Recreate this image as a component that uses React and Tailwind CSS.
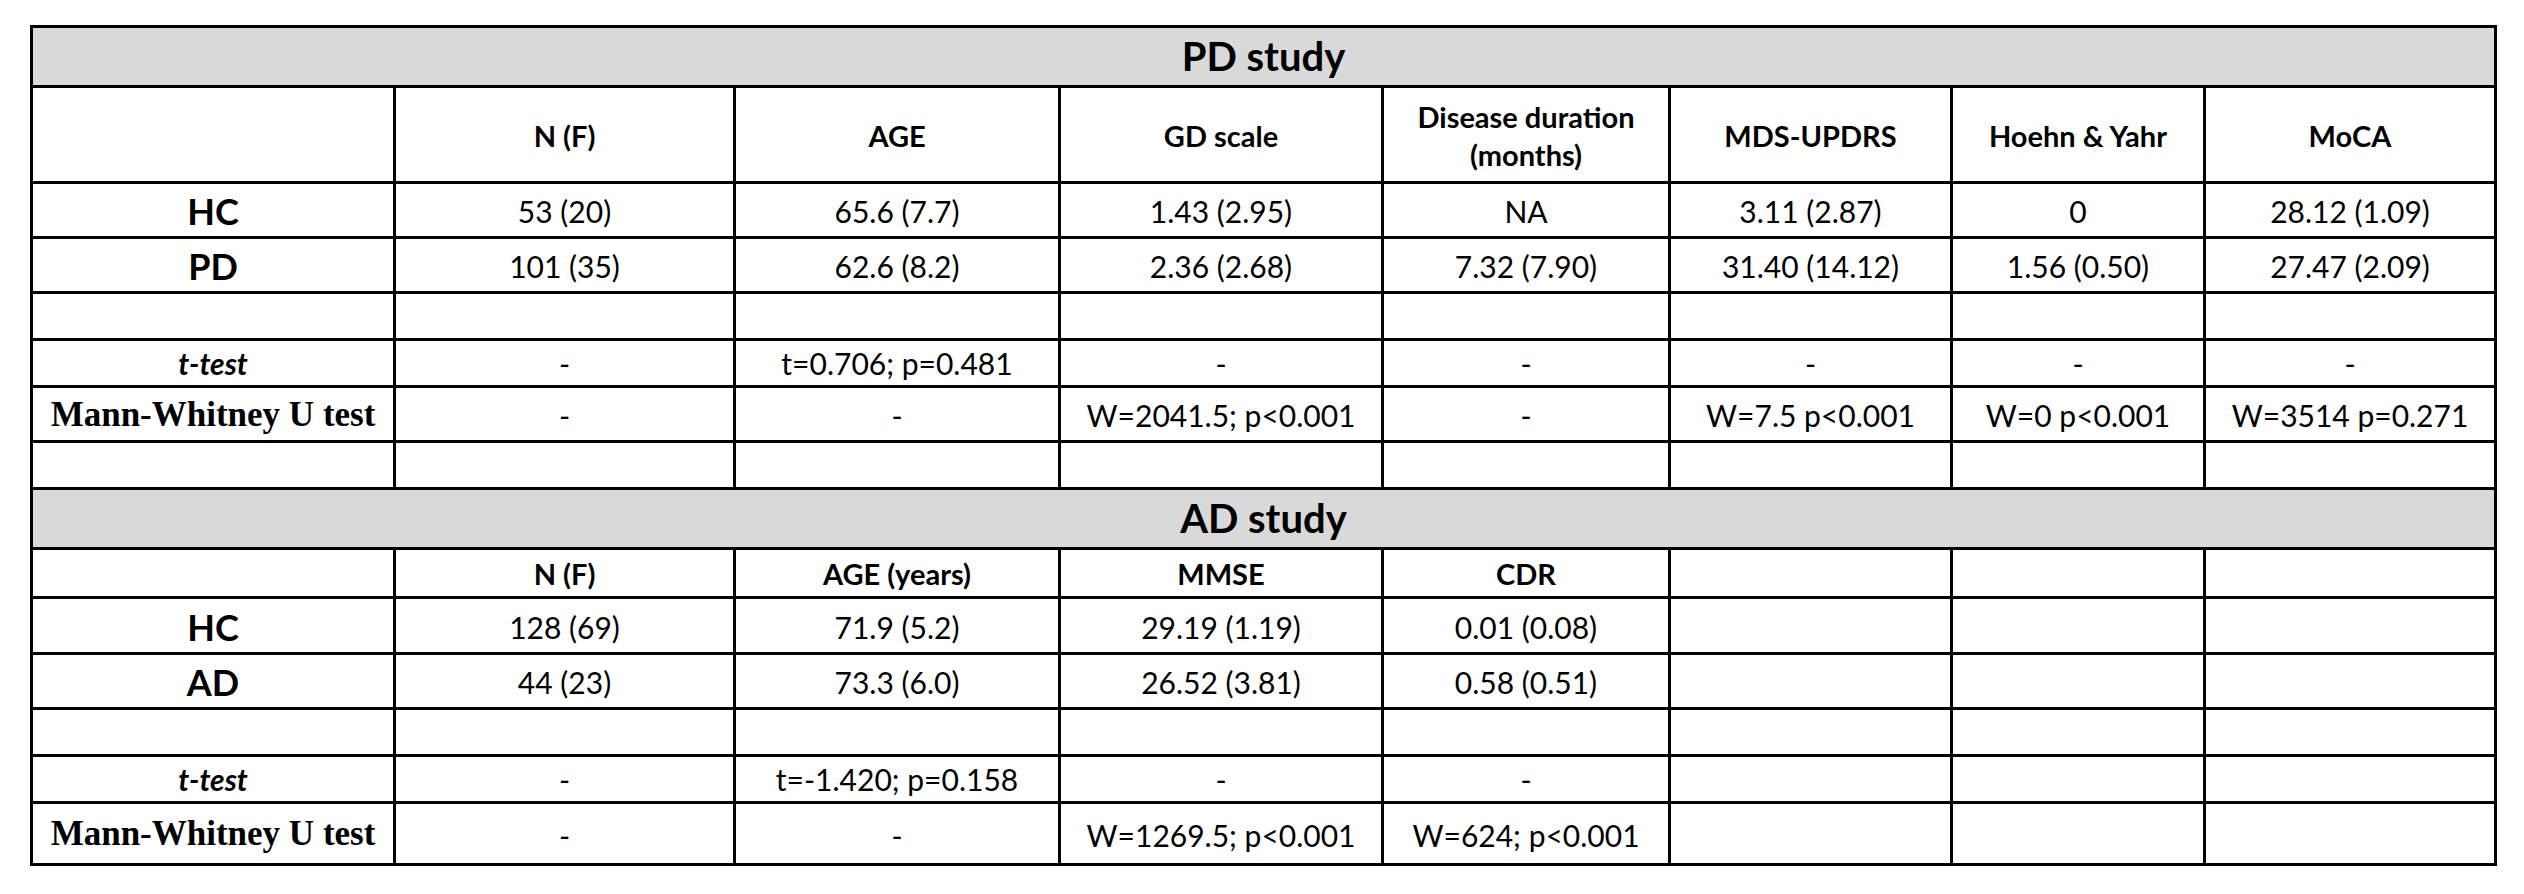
const cols = "grid-cols-[360px_337px_322px_320px_284px_279px_250px_288px]";

const pdHead = ["", "N (F)", "AGE", "GD scale", "Disease duration|(months)", "MDS-UPDRS", "Hoehn & Yahr", "MoCA"];
const pdRows = [
  ["HC", "53 (20)", "65.6 (7.7)", "1.43 (2.95)", "NA", "3.11 (2.87)", "0", "28.12 (1.09)"],
  ["PD", "101 (35)", "62.6 (8.2)", "2.36 (2.68)", "7.32 (7.90)", "31.40 (14.12)", "1.56 (0.50)", "27.47 (2.09)"],
];
const pdT = ["-", "t=0.706; p=0.481", "-", "-", "-", "-", "-"];
const pdW = ["-", "-", "W=2041.5; p<0.001", "-", "W=7.5 p<0.001", "W=0 p<0.001", "W=3514 p=0.271"];

const adHead = ["", "N (F)", "AGE (years)", "MMSE", "CDR", "", "", ""];
const adRows = [
  ["HC", "128 (69)", "71.9 (5.2)", "29.19 (1.19)", "0.01 (0.08)", "", "", ""],
  ["AD", "44 (23)", "73.3 (6.0)", "26.52 (3.81)", "0.58 (0.51)", "", "", ""],
];
const adT = ["-", "t=-1.420; p=0.158", "-", "-", "", "", ""];
const adW = ["-", "-", "W=1269.5; p<0.001", "W=624; p<0.001", "", "", ""];

const sans = "font-['Lato','Liberation_Sans',sans-serif]";

const Cell = ({ children, className = "" }) => (
  <div className={`flex items-center justify-center text-center bg-white text-black ${className}`}>{children}</div>
);

const Title = ({ text }) => (
  <div className={`col-span-8 flex items-center justify-center bg-[#d9d9d9] text-black ${sans} font-bold text-[40px] leading-none pb-[2px]`}>
    {text}
  </div>
);

const HeadRow = ({ items }) =>
  items.map((h, i) => (
    <Cell key={i} className={`flex-col bg-[#f2f2f2] ${sans} font-bold text-[29px] leading-[38px] pt-[2px]`}>
      {h.split("|").map((part, j) => (
        <div key={j}>{part}</div>
      ))}
    </Cell>
  ));

const DataRow = ({ row }) =>
  row.map((v, i) =>
    i === 0 ? (
      <Cell key={i} className={`${sans} font-bold text-[36px] leading-none pt-[2px]`}>{v}</Cell>
    ) : (
      <Cell key={i} className={`${sans} text-[30px] leading-none pt-[2px]`}>{v}</Cell>
    )
  );

const EmptyRow = () => Array.from({ length: 8 }).map((_, i) => <Cell key={i} />);

const TestRow = ({ values }) => (
  <>
    <Cell className={`${sans} font-bold italic text-[30px] leading-none`}>t-test</Cell>
    {values.map((v, i) => (
      <Cell key={i} className={`${sans} text-[30px] leading-none`}>{v}</Cell>
    ))}
  </>
);

const MannRow = ({ values }) => (
  <>
    <Cell className="font-['Liberation_Serif',serif] font-bold text-[35px] leading-none">Mann-Whitney U test</Cell>
    {values.map((v, i) => (
      <Cell key={i} className={`${sans} text-[30px] leading-none pt-[2px]`}>{v}</Cell>
    ))}
  </>
);

export default function App() {
  return (
    <div className="w-[2524px] h-[894px] bg-white pt-[25px] pl-[30px]">
      <div
        className={`inline-grid ${cols} grid-rows-[57px_93px_52px_52px_44px_44px_52px_44px_57px_46px_53px_52px_44px_44px_59px] gap-[3px] p-[3px] bg-black`}
      >
        {/* PD study */}
        <Title text="PD study" />
        <HeadRow items={pdHead} />
        {pdRows.map((r, i) => (
          <DataRow key={i} row={r} />
        ))}
        <EmptyRow />
        <TestRow values={pdT} />
        <MannRow values={pdW} />
        <EmptyRow />

        {/* AD study */}
        <Title text="AD study" />
        <HeadRow items={adHead} />
        {adRows.map((r, i) => (
          <DataRow key={i} row={r} />
        ))}
        <EmptyRow />
        <TestRow values={adT} />
        <MannRow values={adW} />
      </div>
    </div>
  );
}
